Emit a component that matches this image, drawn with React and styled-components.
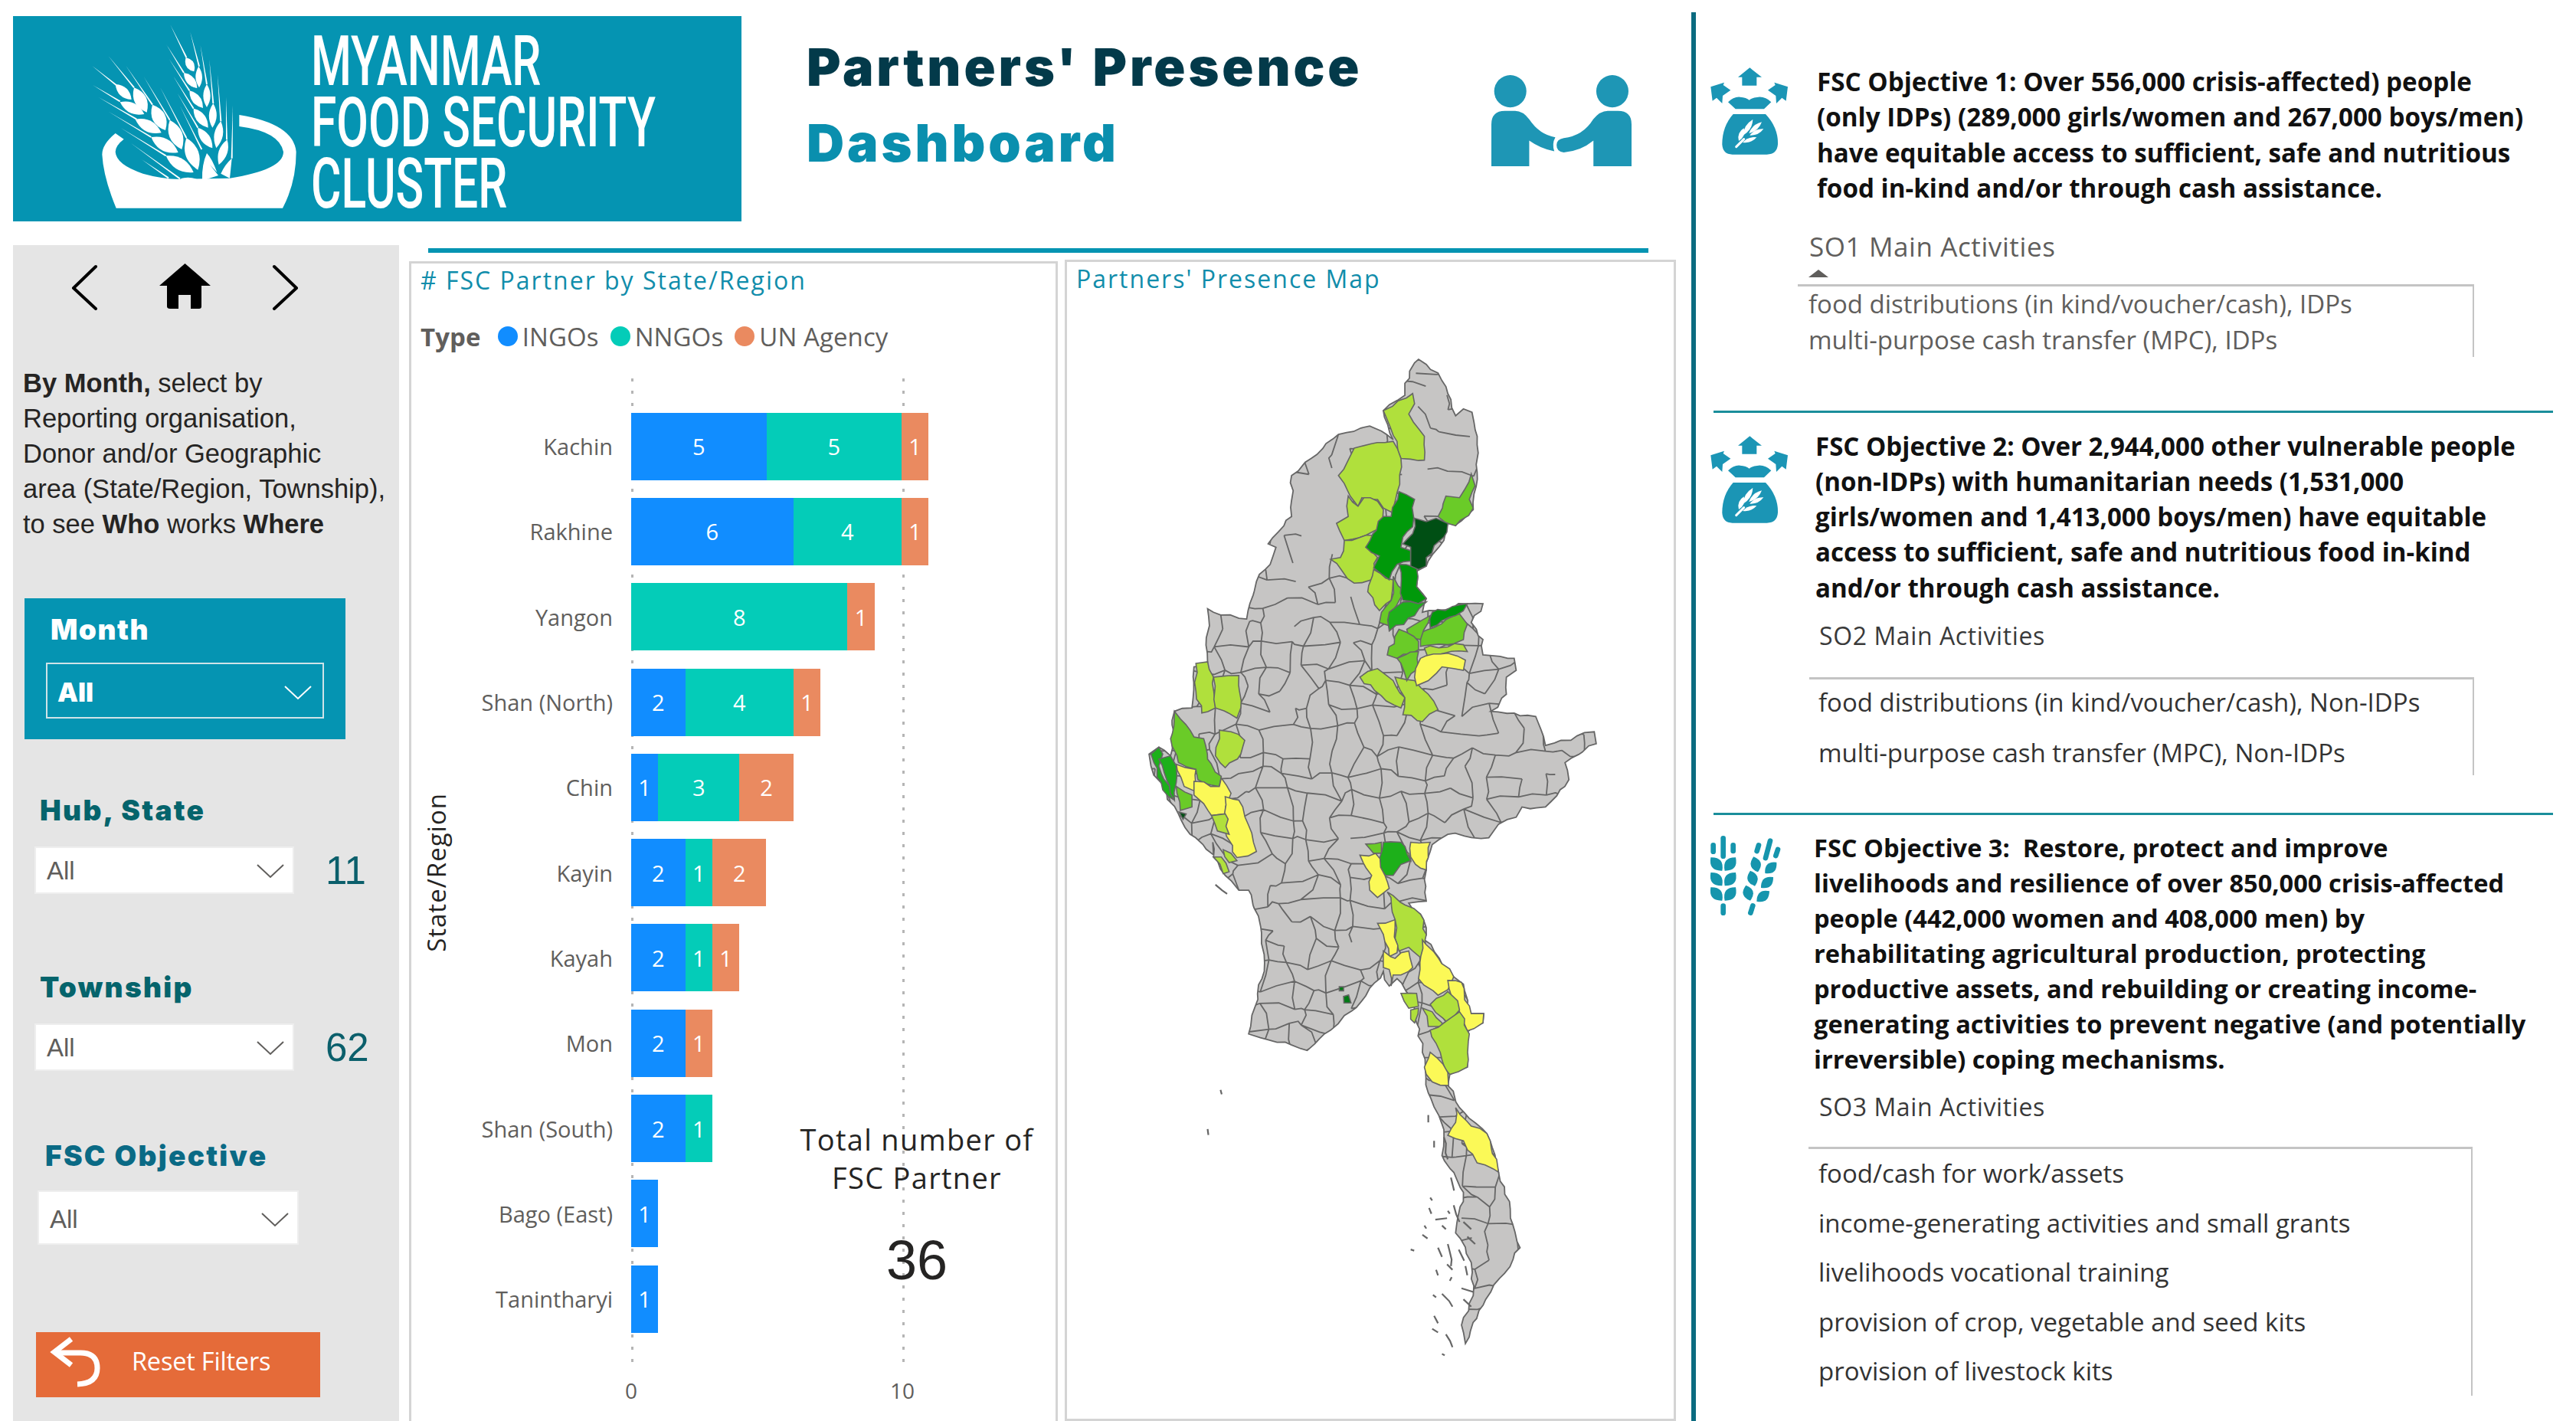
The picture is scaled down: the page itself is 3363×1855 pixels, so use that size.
import React from 'react'
import styled, { createGlobalStyle } from 'styled-components'

const UNIT = 35.3
const SEGOE = `"Open Sans", "Noto Sans", sans-serif`
const HEAVY = `Inter, "DejaVu Sans", sans-serif`
const ARIAL = `"Liberation Sans", Arial, sans-serif`
const TYPE_COLORS = { i: '#118dff', n: '#04ccb8', u: '#ea8a60' }

const ROWS = [
    { name: 'Kachin', i: 5, n: 5, u: 1 },
    { name: 'Rakhine', i: 6, n: 4, u: 1 },
    { name: 'Yangon', i: 0, n: 8, u: 1 },
    { name: 'Shan (North)', i: 2, n: 4, u: 1 },
    { name: 'Chin', i: 1, n: 3, u: 2 },
    { name: 'Kayin', i: 2, n: 1, u: 2 },
    { name: 'Kayah', i: 2, n: 1, u: 1 },
    { name: 'Mon', i: 2, n: 0, u: 1 },
    { name: 'Shan (South)', i: 2, n: 1, u: 0 },
    { name: 'Bago (East)', i: 1, n: 0, u: 0 },
    { name: 'Tanintharyi', i: 1, n: 0, u: 0 },
]

let jagSeed = 4711
const jagRnd = () => {
    jagSeed = (jagSeed * 16807) % 2147483647
    return jagSeed / 2147483647 - 0.5
}

// map points are read off the two crops of the reference, so convert them to page pixels
const convert = (pts, oy, sy) => pts.trim().split(/\s+/).map(p => {
    const [x, y] = p.split(',').map(Number)
    return [1380 + x / 1.96, oy + y / sy]
})
const up = pts => convert(pts, 420, 2.24)
const low = pts => convert(pts, 1100, 2.077)

// borders on the map are jagged, so break each edge into small uneven steps
const jag = (list, closed = true) => {
    const out = []
    list.forEach((a, i) => {
        const b = list[(i + 1) % list.length]
        out.push(a)
        if (!closed && i === list.length - 1) return
        const len = Math.hypot(b[0] - a[0], b[1] - a[1])
        const steps = Math.min(6, Math.floor(len / 9))
        for (let s = 1; s < steps; s++) {
            out.push([
                a[0] + ((b[0] - a[0]) * s) / steps + jagRnd() * 5,
                a[1] + ((b[1] - a[1]) * s) / steps + jagRnd() * 5,
            ])
        }
    })
    return out.map(p => `${p[0].toFixed(1)},${p[1].toFixed(1)}`).join(' ')
}

const OUTLINE = jag([
    ...up(`925,110 945,125 975,150 1000,210 1020,275 1040,255 1062,265 1075,360 1075,440 1065,550 1020,595 1000,590 990,640 950,700 945,715 920,730 920,775 945,810 935,850 1050,825 1090,825 1060,880 1090,930 1090,975 1170,985 1175,1020 1150,1040 1150,1090 1110,1140 1225,1155 1250,1240 1375,1200 1380,1235 1300,1290 1310,1340 1250,1420 1190,1420 1175,1450 1130,1470 1105,1510 1000,1500 960,1530`),
    ...low(`955,25 945,75 945,160 900,165 930,195 945,250 940,265 1015,365 1040,385 1060,465 1092,465 1090,490 1050,515 1050,610 1005,630 1000,660 1030,720 1100,790 1130,895 1160,995 1185,1100 1145,1170 1110,1220 1080,1270 1045,1360 1035,1310 1065,1230 1060,1140 1020,1060 1040,950 985,850 990,780 950,680 935,570 920,490 905,420 870,370 850,390 835,350 780,430 735,470 700,510 640,565 600,550 520,530 490,520 505,450 530,350 515,200 490,130 465,130 430,90 400,40 398,0`),
    ...up(`400,1560 340,1500 310,1440 240,1300 235,1265 260,1245 290,1270 300,1140 345,1130 350,1010 385,1000 385,840 400,850 485,870 510,760 545,710 560,660 540,650 600,570 600,450 650,400 720,330 800,305 830,320 860,345 835,260 890,215 890,180 915,120`),
])

const LIGHT = '#b0e03c'
const MID = '#6acb28'
const GREEN = '#00990a'
const BRIGHT = '#1db01a'
const DARK = '#004f14'
const YELLOW = '#fbf957'

const REGIONS_UP = [
    [LIGHT, '910,210 915,240 900,270 940,335 940,405 880,400 870,350 835,260'],
    [LIGHT, '760,370 860,350 880,400 870,500 860,560 835,545 820,520 780,515 770,540 750,510 720,450 745,405'],
    [LIGHT, '745,510 770,540 785,515 820,525 835,550 835,600 790,625 735,640 715,590 745,570'],
    [LIGHT, '735,640 790,625 820,625 790,660 820,690 805,755 760,765 730,730 700,695 725,690'],
    [LIGHT, '810,725 860,755 855,815 825,845 795,790'],
    [LIGHT, '775,1040 820,1015 860,1050 890,1100 880,1130 830,1095'],
    [LIGHT, '865,1040 915,1050 950,1090 975,1135 935,1170 885,1150 890,1100'],
    [LIGHT, '355,1000 385,995 400,1040 405,1130 370,1145 355,1080'],
    [LIGHT, '400,1040 465,1035 470,1130 460,1160 405,1130'],
    [LIGHT, '415,1195 445,1200 480,1225 470,1265 430,1305 405,1270'],
    [LIGHT, '940,955 1040,945 1050,965 990,970 950,985'],
    [MID, '1060,445 1070,480 1055,520 1065,545 1020,597 975,570 995,510 1030,515'],
    [MID, '860,745 890,790 855,850 850,890 825,880 830,850 855,815'],
    [MID, '930,910 1030,855 1050,885 1040,930 1000,945 930,950'],
    [MID, '895,900 955,860 930,930 900,925'],
    [MID, '875,900 925,935 925,960 870,985 845,975'],
    [MID, '870,985 925,965 925,1015 895,1050 880,1000'],
    [MID, '300,1140 340,1195 350,1215 375,1220 385,1280 420,1330 415,1360 360,1340 355,1310 310,1290 290,1220'],
    [GREEN, '875,497 915,520 910,600 885,630 880,660 905,670 905,700 870,710 850,755 810,720 825,685 790,660 835,570 855,570'],
    [GREEN, '875,710 920,720 920,775 945,810 925,825 885,815'],
    [BRIGHT, '885,820 945,820 915,860 850,905 850,850'],
    [GREEN, '960,850 1050,825 1020,860 955,895'],
    [DARK, '915,575 945,585 970,575 1000,590 990,630 965,655 945,690 945,715 925,725 905,715 905,660 885,650 910,620'],
    [YELLOW, '930,985 1000,970 1045,990 1040,1020 1015,1015 985,1010 950,1050 920,1065 915,1040'],
    [BRIGHT, '240,1265 260,1245 270,1265 260,1300 300,1400 270,1370'],
    [BRIGHT, '260,1280 290,1270 305,1300 300,1400'],
    [MID, '305,1360 345,1385 345,1420 315,1430'],
    [YELLOW, '305,1295 355,1310 355,1375 325,1360'],
    [YELLOW, '350,1345 415,1360 420,1335 445,1380 430,1440 395,1445 375,1410 350,1385'],
    [YELLOW, '430,1390 465,1400 510,1550 460,1568 430,1490'],
    [LIGHT, '395,1445 430,1440 440,1500 410,1490'],
    [DARK, '312,1435 330,1440 322,1456'],
].map(([fill, pts]) => [fill, jag(up(pts))])

const REGIONS_LOW = [
    [MID, '790,5 830,0 830,30 810,30'],
    [LIGHT, '875,0 900,30 905,50 885,30'],
    [BRIGHT, '835,0 880,0 905,50 880,60 860,90 840,90 825,65'],
    [YELLOW, '905,0 955,0 945,75 930,70 905,40'],
    [YELLOW, '775,35 815,30 850,125 820,150 800,130 805,90'],
    [LIGHT, '845,135 890,170 930,195 945,250 940,325 900,285 875,295 865,260 865,210'],
    [YELLOW, '820,220 865,210 870,300 850,310 835,250'],
    [YELLOW, '835,295 865,315 880,300 900,295 910,340 880,360 860,360 855,390 850,345 835,340'],
    [YELLOW, '935,265 1015,365 1000,400 975,415 925,370'],
    [YELLOW, '1000,375 1035,380 1060,465 1092,465 1090,490 1050,512 1030,460 1010,420'],
    [LIGHT, '880,410 920,410 925,445 900,450'],
    [LIGHT, '905,455 925,450 915,490 905,480'],
    [LIGHT, '935,450 960,460 985,490 985,500 950,500'],
    [LIGHT, '955,440 1000,405 1025,430 1030,455 1000,490'],
    [LIGHT, '955,510 990,490 1030,460 1055,520 1050,610 1005,630 985,590'],
    [YELLOW, '955,570 1000,625 1002,660 960,650 945,630 940,610'],
    [YELLOW, '1020,720 1060,770 1100,790 1125,860 1130,895 1075,870 1040,810 1000,795 1020,760'],
    [LIGHT, '400,40 420,40 440,80 425,85'],
    [LIGHT, '425,20 445,30 460,50 440,55'],
    ['#007a14', '733,418 746,414 752,436 734,436'],
    ['#007a14', '722,392 733,392 733,403 722,403'],
].map(([fill, pts]) => [fill, jag(low(pts))])

const ISLANDS = [
    '418,672 421,684', '385,778 387,794', '1008,910 1016,945', '955,964 960,972', '952,992 958,1008',
    '968,1024 998,1020', '985,1040 995,1050', '1015,985 1030,1030', '1000,1090 1008,1150', '1028,1105 1042,1135',
    '935,1065 948,1075', '905,1105 914,1108', '975,1100 985,1125', '970,1160 975,1175', '998,1145 1012,1160',
    '962,1228 970,1235', '985,1225 1012,1260', '965,1285 975,1305', '995,1335 1012,1370', '985,1388 992,1392',
    '1045,1150 1050,1175', '950,740 950,760', '965,810 965,828', '405,115 435,140', '990,800 1000,860',
    '960,1320 975,1330', '1040,1030 1060,1050', '1050,1070 1070,1090', '1035,1210 1065,1220', '1040,1240 1060,1260',
    '940,1040 945,1048', '1000,1000 1005,1008', '1005,1190 1010,1180',
]

// township boundaries: a jittered mesh, clipped to the country outline
const buildMesh = () => {
    let n = 1
    const rnd = () => {
        n += 1
        const v = Math.sin(n * 12.9898) * 43758.5453
        return v - Math.floor(v)
    }
    const nodes = {}
    const cols = 22
    const rows = 47
    for (let i = 0; i <= cols; i++) {
        for (let j = 0; j <= rows; j++) {
            nodes[`${i}:${j}`] = [1470 + i * 30 + (rnd() - 0.5) * 24, 450 + j * 28 + (rnd() - 0.5) * 20]
        }
    }
    const edge = (a, b) => {
        const mx = (a[0] + b[0]) / 2 + (rnd() - 0.5) * 9
        const my = (a[1] + b[1]) / 2 + (rnd() - 0.5) * 9
        return `M${a[0].toFixed(1)} ${a[1].toFixed(1)}L${mx.toFixed(1)} ${my.toFixed(1)}L${b[0].toFixed(1)} ${b[1].toFixed(1)}`
    }
    let d = ''
    for (let i = 0; i <= cols; i++) {
        for (let j = 0; j <= rows; j++) {
            const a = nodes[`${i}:${j}`]
            const skip = a[1] < 770 ? 0.66 : a[0] > 1880 ? 0.42 : a[1] > 1500 ? 0.3 : 0.2
            if (i < cols && rnd() > skip) d += edge(a, nodes[`${i + 1}:${j}`])
            if (j < rows && rnd() > skip) d += edge(a, nodes[`${i}:${j + 1}`])
        }
    }
    return d
}
const MESH = buildMesh()

// a wheat grain: a pointed leaf between two points, w is its full width
const leaf = (x1, y1, x2, y2, w) => {
    const len = Math.hypot(x2 - x1, y2 - y1)
    const nx = ((y2 - y1) / len) * w
    const ny = (-(x2 - x1) / len) * w
    const mx = (x1 + x2) / 2
    const my = (y1 + y2) / 2
    return `M${x1} ${y1}Q${mx + nx} ${my + ny} ${x2} ${y2}Q${mx - nx} ${my - ny} ${x1} ${y1}Z`
}

const awn = (x1, y1, x2, y2) => {
    const len = Math.hypot(x2 - x1, y2 - y1)
    const nx = ((y2 - y1) / len) * 3
    const ny = (-(x2 - x1) / len) * 3
    return `${x1 + nx},${y1 + ny} ${x2},${y2} ${x1 - nx},${y1 - ny}`
}

const LOGO_GRAINS = [
    [92, 255, 155, 315, 36], [165, 268, 215, 365, 48], [237, 335, 288, 435, 52], [305, 395, 352, 510, 52], [370, 465, 415, 590, 52],
    [110, 325, 205, 372, 40], [170, 392, 272, 445, 44], [232, 462, 338, 522, 48], [290, 535, 398, 600, 46],
    [368, 150, 400, 205, 32], [360, 210, 412, 270, 32], [382, 280, 435, 348, 34], [398, 350, 455, 425, 36], [415, 425, 472, 505, 36],
    [418, 185, 420, 268, 26], [450, 255, 450, 345, 28], [475, 330, 472, 425, 30], [505, 400, 487, 505, 34], [530, 472, 497, 570, 34],
    [345, 625, 415, 628, 12],
]

const LOGO_AWNS = [
    [95, 258, 0, 182], [110, 322, 3, 258], [175, 392, 25, 305], [232, 462, 65, 362], [290, 535, 112, 425], [345, 625, 152, 485], [300, 622, 195, 550],
    [165, 268, 65, 145], [237, 335, 133, 182], [305, 395, 203, 225], [370, 465, 268, 268],
    [370, 150, 307, 22], [360, 210, 292, 100], [382, 280, 302, 155], [398, 350, 318, 222], [415, 425, 335, 290], [430, 510, 345, 340],
    [420, 185, 385, 50], [450, 255, 425, 103], [475, 330, 460, 160], [505, 400, 492, 218], [528, 472, 525, 305], [548, 545, 552, 338],
]

const App = () => {
    return (
        <Page>
            <GlobalStyle />
            <LeftPane>
                <Header>
                    <Banner>
                        <BowlLogo />
                        <BannerText>
                            <span>MYANMAR</span>
                            <span>FOOD SECURITY</span>
                            <span>CLUSTER</span>
                        </BannerText>
                    </Banner>
                    <TitleBlock>
                        <TitleLine>Partners' Presence</TitleLine>
                        <TitleLine $accent>Dashboard</TitleLine>
                    </TitleBlock>
                    <Handshake />
                </Header>
                <Body>
                    <Sidebar>
                        <NavRow>
                            <NavIcon width="36" height="62" viewBox="0 0 36 62"><polyline points="32,5 3,33 32,60" fill="none" stroke="#000" strokeWidth="4" strokeLinecap="round" strokeLinejoin="round" /></NavIcon>
                            <NavIcon width="67" height="60" viewBox="0 0 67 60"><path d="M33.5 0 L67 29 H55 V56 Q55 59 52 59 H41 V41 H25 V59 H14 Q10 59 10 56 V29 H0 Z" fill="#000" /></NavIcon>
                            <NavIcon width="36" height="62" viewBox="0 0 36 62"><polyline points="4,5 33,33 4,60" fill="none" stroke="#000" strokeWidth="4" strokeLinecap="round" strokeLinejoin="round" /></NavIcon>
                        </NavRow>
                        <HelpText>
                            <b>By Month,</b> select by<br />
                            Reporting organisation,<br />
                            Donor and/or Geographic<br />
                            area (State/Region, Township),<br />
                            to see <b>Who</b> works <b>Where</b>
                        </HelpText>
                        <MonthBox>
                            <MonthTitle>Month</MonthTitle>
                            <MonthSelect>All<Chevron $color="#fff" /></MonthSelect>
                        </MonthBox>

                        <FilterTitle $top={70} $left={35}>Hub, State</FilterTitle>
                        <FilterRow $top={24} $left={28}>
                            <Dropdown>All<Chevron $color="#605e5c" /></Dropdown>
                            <Count>11</Count>
                        </FilterRow>

                        <FilterTitle $top={99} $left={35}>Township</FilterTitle>
                        <FilterRow $top={24} $left={28}>
                            <Dropdown>All<Chevron $color="#605e5c" /></Dropdown>
                            <Count>62</Count>
                        </FilterRow>

                        <FilterTitle $top={88} $left={42} $color="#0a6a85">FSC Objective</FilterTitle>
                        <FilterRow $top={22} $left={32}>
                            <Dropdown $tall>All<Chevron $color="#605e5c" /></Dropdown>
                        </FilterRow>

                        <ResetButton>
                            <ResetIcon width="110" height="85" viewBox="0 0 110 85">
                                <path d="M26 27 H58 Q80 27 80 47 Q80 67 54 68" fill="none" stroke="#fff" strokeWidth="7" />
                                <path d="M46 9 L24 26 L46 43" fill="none" stroke="#fff" strokeWidth="7" />
                            </ResetIcon>
                            Reset Filters
                        </ResetButton>
                    </Sidebar>

                    <Visuals>
                        <HeaderRule />
                        <Panels>
                            <ChartPanel>
                                <PanelTitle>
                                    # FSC Partner by State/Region
                                </PanelTitle>
                                <Legend>
                                    <LegendName>Type</LegendName>
                                    <LegendItem $color={TYPE_COLORS.i}>INGOs</LegendItem>
                                    <LegendItem $color={TYPE_COLORS.n}>NNGOs</LegendItem>
                                    <LegendItem $color={TYPE_COLORS.u}>UN Agency</LegendItem>
                                </Legend>
                                <ChartBody>
                                    <AxisTitle>State/Region</AxisTitle>
                                    <Labels>
                                        {ROWS.map(row => <RowLabel key={row.name}>{row.name}</RowLabel>)}
                                    </Labels>
                                    <Plot>
                                        {ROWS.map(row => (
                                            <BarRow key={row.name}>
                                                {['i', 'n', 'u'].map(t => row[t] > 0 && (
                                                    <Segment key={t} $width={row[t] * UNIT} $color={TYPE_COLORS[t]}>{row[t]}</Segment>
                                                ))}
                                            </BarRow>
                                        ))}
                                    </Plot>
                                </ChartBody>
                                <AxisRow>
                                    <AxisTick>0</AxisTick>
                                    <AxisTick>10</AxisTick>
                                </AxisRow>
                                <TotalCard>
                                    <TotalLabel>Total number of<br />FSC Partner</TotalLabel>
                                    <TotalValue>36</TotalValue>
                                </TotalCard>
                            </ChartPanel>
                            <MapPanel>
                                <PanelTitle>Partners' Presence Map</PanelTitle>
                                <MapDrawing />
                            </MapPanel>
                        </Panels>
                    </Visuals>
                </Body>
            </LeftPane>

            <Divider />

            <RightPane>
                <ObjectiveRow $top={84}>
                    <SackIcon $top={-4} />
                    <ObjectiveText $left={27} $line={46.4} $size={33.2}>
                        <span>FSC Objective 1: Over 556,000 crisis-affected) people</span>
                        <span>(only IDPs) (289,000 girls/women and 267,000 boys/men)</span>
                        <span>have equitable access to sufficient, safe and nutritious</span>
                        <span>food in-kind and/or through cash assistance.</span>
                    </ObjectiveText>
                </ObjectiveRow>
                <ActivityHeading $top={30} $left={148} $large>SO1 Main Activities</ActivityHeading>
                <SortMark />
                <ActivityBox $top={9} $left={133} $width={883} $height={95}>
                    <ActivityItem $height={46.5} $inset={14} $muted>food distributions (in kind/voucher/cash), IDPs</ActivityItem>
                    <ActivityItem $height={46.5} $inset={14} $muted>multi-purpose cash transfer (MPC), IDPs</ActivityItem>
                </ActivityBox>
                <SectionRule $top={70} />

                <ObjectiveRow $top={21}>
                    <SackIcon $top={1} />
                    <ObjectiveText $left={25} $line={46.25} $size={33.1}>
                        <span>FSC Objective 2: Over 2,944,000 other vulnerable people</span>
                        <span>(non-IDPs) with humanitarian needs (1,531,000</span>
                        <span>girls/women and 1,413,000 boys/men) have equitable</span>
                        <span>access to sufficient, safe and nutritious food in-kind</span>
                        <span>and/or through cash assistance.</span>
                    </ObjectiveText>
                </ObjectiveRow>
                <ActivityHeading $top={17} $left={161}>SO2 Main Activities</ActivityHeading>
                <ActivityBox $top={32} $left={148} $width={868} $height={128}>
                    <ActivityItem $height={59} $gap={7} $inset={12}>food distributions (in kind/voucher/cash), Non-IDPs</ActivityItem>
                    <ActivityItem $height={59} $gap={7} $inset={12}>multi-purpose cash transfer (MPC), Non-IDPs</ActivityItem>
                </ActivityBox>
                <SectionRule $top={49} />

                <ObjectiveRow $top={20}>
                    <WheatIcon />
                    <ObjectiveText $left={33} $line={46.1} $size={32.6}>
                        <span>FSC Objective 3:&nbsp; Restore, protect and improve</span>
                        <span>livelihoods and resilience of over 850,000 crisis-affected</span>
                        <span>people (442,000 women and 408,000 men) by</span>
                        <span>rehabilitating agricultural production, protecting</span>
                        <span>productive assets, and rebuilding or creating income-</span>
                        <span>generating activities to prevent negative (and potentially</span>
                        <span>irreversible) coping mechanisms.</span>
                    </ObjectiveText>
                </ObjectiveRow>
                <ActivityHeading $top={16} $left={161}>SO3 Main Activities</ActivityHeading>
                <ActivityBox $top={30} $left={147} $width={867} $height={325}>
                    <ActivityItem $height={64.5} $inset={13}>food/cash for work/assets</ActivityItem>
                    <ActivityItem $height={64.5} $inset={13}>income-generating activities and small grants</ActivityItem>
                    <ActivityItem $height={64.5} $inset={13}>livelihoods vocational training</ActivityItem>
                    <ActivityItem $height={64.5} $inset={13}>provision of crop, vegetable and seed kits</ActivityItem>
                    <ActivityItem $height={64.5} $inset={13}>provision of livestock kits</ActivityItem>
                </ActivityBox>
            </RightPane>
        </Page>
    )
}

export default App

// Drawings
const Chevron = ({ $color }) => (
    <svg width="36" height="20" viewBox="0 0 36 20">
        <polyline points="1,2 18,18 35,2" fill="none" stroke={$color} strokeWidth="2" />
    </svg>
)

const BowlLogo = () => (
    <LogoSvg width="280" height="260" viewBox="0 0 840 780" fill="#fff">
        <path d="M92 447 L125 470 Q92 495 92 520 Q95 570 200 605 Q270 625 345 627 L540 623 Q750 590 750 520 Q735 440 577 420 V375 Q790 410 800 520 Q800 640 747 740 H95 Q45 620 40 530 Q40 490 92 447 Z" />
        {LOGO_AWNS.map((a, i) => <polygon key={i} points={awn(...a)} />)}
        {LOGO_GRAINS.map((g, i) => <path key={i} d={leaf(...g)} />)}
        <path d="M432 628 Q430 570 450 525 Q470 545 490 600 L462 570 L495 612 L440 630 Z" />
        <path d="M548 545 L540 623 L505 605 Q520 570 548 545 Z" />
    </LogoSvg>
)

const Handshake = () => (
    <HandshakeSvg width="183" height="119" viewBox="142 297 548 356" fill="#1e96b5">
        <circle cx="216" cy="360" r="63" />
        <circle cx="615" cy="360" r="63" />
        <path d="M142 653 V490 Q142 437 195 437 H235 Q265 437 290 470 Q330 530 392 540 Q378 565 388 595 Q335 585 290 553 V653 Z" />
        <path d="M690 653 V490 Q690 437 637 437 H597 Q567 437 540 470 Q500 535 425 543 Q397 548 397 570 Q397 597 425 599 Q490 595 541 553 V653 Z" />
    </HandshakeSvg>
)

const SackIcon = ({ $top = 0 }) => (
    <IconSvg $top={$top} width="120" height="130" viewBox="0 0 360 390" fill="#1b95b5">
        <polygon points="178,25 225,62 205,62 205,95 148,95 148,62 132,62" />
        <polygon points="25,100 78,83 74,93 103,113 72,135 70,165 48,143 32,155" />
        <polygon points="327,100 274,83 278,93 249,113 280,135 282,165 304,143 320,155" />
        <path d="M93 160 Q115 138 140 140 Q165 142 176 152 Q188 142 212 140 Q240 138 262 160 L234 187 H122 Z" />
        <path d="M113 207 H240 Q290 260 288 325 Q285 365 245 365 H110 Q72 365 70 325 Q70 255 113 207 Z" />
        <g fill="#fff">
            <line x1="125" y1="335" x2="155" y2="305" stroke="#fff" strokeWidth="9" strokeLinecap="round" />
            <path d={leaf(135, 312, 155, 262, 20)} />
            <path d={leaf(152, 290, 190, 228, 20)} />
            <path d={leaf(175, 282, 225, 238, 18)} />
            <path d={leaf(178, 290, 232, 265, 16)} />
            <path d={leaf(150, 318, 205, 298, 16)} />
        </g>
    </IconSvg>
)

const WheatIcon = () => (
    <IconSvg $top={1} width="110" height="120" viewBox="0 0 330 360" fill="#1595ad">
        <g stroke="#1595ad" strokeWidth="20" strokeLinecap="round">
            <line x1="35" y1="55" x2="35" y2="80" />
            <line x1="74" y1="28" x2="74" y2="98" />
            <line x1="113" y1="55" x2="113" y2="78" />
            <line x1="74" y1="293" x2="74" y2="320" />
            <line x1="213" y1="55" x2="206" y2="78" />
            <line x1="258" y1="38" x2="240" y2="105" />
            <line x1="288" y1="72" x2="280" y2="96" />
            <line x1="190" y1="292" x2="181" y2="320" />
        </g>
        {[103, 162, 220].map(y => (
            <g key={y}>
                <path d={leaf(25, y, 70, y + 52, 42)} />
                <path d={leaf(123, y, 80, y + 52, 42)} />
            </g>
        ))}
        <path d={leaf(193, 100, 210, 160, 40)} />
        <path d={leaf(180, 155, 198, 215, 40)} />
        <path d={leaf(163, 212, 180, 272, 40)} />
        <path d={leaf(283, 122, 238, 165, 38)} />
        <path d={leaf(270, 180, 222, 222, 38)} />
        <path d={leaf(255, 235, 205, 275, 38)} />
    </IconSvg>
)

const MapDrawing = () => (
    <MapSvg width="792" height="1445" viewBox="1393 408 792 1445">
        <defs>
            <clipPath id="country"><polygon points={OUTLINE} /></clipPath>
        </defs>
        <polygon points={OUTLINE} fill="#c6c5c4" />
        <path d={MESH} clipPath="url(#country)" fill="none" stroke="#666" strokeWidth="1.8" />
        <polygon points={OUTLINE} fill="none" stroke="#666" strokeWidth="1.8" />
        {REGIONS_UP.map(([fill, pts], i) => <polygon key={i} points={pts} fill={fill} stroke="#666" strokeWidth="1.6" />)}
        {REGIONS_LOW.map(([fill, pts], i) => <polygon key={i} points={pts} fill={fill} stroke="#666" strokeWidth="1.6" />)}
        {ISLANDS.map((pts, i) => <polyline key={i} points={jag(low(pts), false)} fill="none" stroke="#666" strokeWidth="2.2" />)}
    </MapSvg>
)

// Components
const GlobalStyle = createGlobalStyle`
    html, body {
        margin:0;
        padding:0;
        background:#fff;
    }
    * {
        box-sizing:border-box;
    }
`

const Page = styled.div`
    display:flex;
    width:3363px;
    height:1855px;
    overflow:hidden;
    background:#fff;
    font-family:${SEGOE};
`

const LeftPane = styled.div`
    width:2208px;
    display:flex;
    flex-direction:column;
`

const Header = styled.div`
    display:flex;
    height:320px;
    padding:21px 0 0 17px;
    align-items:flex-start;
`

const Banner = styled.div`
    display:flex;
    flex:none;
    width:951px;
    height:268px;
    background:#0594b2;
`

const LogoSvg = styled.svg`
    flex:none;
    margin:4px 0 0 103px;
`

const BannerText = styled.div`
    display:flex;
    flex-direction:column;
    margin:19px 0 0 6px;
    font-family:Roboto, sans-serif;
    font-weight:500;
    font-size:91px;
    line-height:80px;
    color:#fff;

    span {
        display:block;
        white-space:nowrap;
        transform:scaleX(0.665);
        transform-origin:left center;
    }
`

const TitleBlock = styled.div`
    display:flex;
    flex:none;
    flex-direction:column;
    gap:20px;
    margin:27px 0 0 85px;
    width:894px;
`

const TitleLine = styled.div`
    font-family:${HEAVY};
    font-weight:900;
    font-size:68px;
    line-height:79px;
    letter-spacing:3.9px;
    white-space:nowrap;
    color:${p => p.$accent ? '#0a8fae' : '#033a4a'};
`

const HandshakeSvg = styled.svg`
    flex:none;
    margin-top:77px;
`

const Body = styled.div`
    flex:1;
    display:flex;
    min-height:0;
`

const Sidebar = styled.div`
    width:504px;
    margin-left:17px;
    padding-top:23px;
    background:#e5e5e5;
    display:flex;
    flex-direction:column;
`

const NavRow = styled.div`
    display:flex;
    align-items:center;
    height:62px;
    padding-left:76px;
    gap:79px;
`

const NavIcon = styled.svg`
    flex:none;
`

const HelpText = styled.div`
    margin:72px 0 0 13px;
    font-family:${ARIAL};
    font-size:34.5px;
    line-height:46px;
    color:#252423;
    white-space:nowrap;
`

const MonthBox = styled.div`
    width:419px;
    height:184px;
    margin:74px 0 0 15px;
    padding:18px 28px 0;
    background:#0594b2;
`

const MonthTitle = styled.div`
    font-family:${HEAVY};
    font-weight:900;
    font-size:37px;
    line-height:46px;
    letter-spacing:1.5px;
    color:#fff;
    padding-left:6px;
`

const MonthSelect = styled.div`
    display:flex;
    align-items:center;
    justify-content:space-between;
    height:73px;
    margin-top:20px;
    padding:4px 14px 0 13px;
    border:2px solid #cfe3e8;
    font-family:${HEAVY};
    font-weight:900;
    font-size:34px;
    color:#fff;
`

const FilterTitle = styled.div`
    margin:${p => p.$top}px 0 0 ${p => p.$left}px;
    font-family:${HEAVY};
    font-weight:900;
    font-size:37px;
    line-height:46px;
    letter-spacing:2.3px;
    color:${p => p.$color || '#05646c'};
`

const FilterRow = styled.div`
    display:flex;
    align-items:center;
    margin:${p => p.$top}px 0 0 ${p => p.$left}px;
`

const Dropdown = styled.div`
    display:flex;
    align-items:center;
    justify-content:space-between;
    width:${p => p.$tall ? 341 : 339}px;
    height:${p => p.$tall ? 71 : 62}px;
    padding:${p => p.$tall ? 4 : 2}px 11px 0 14px;
    background:#fff;
    border:2px solid #eeeeee;
    font-family:${ARIAL};
    font-size:33px;
    color:#605e5c;
`

const Count = styled.div`
    margin-left:41px;
    font-family:${ARIAL};
    font-size:51px;
    color:#0b5f6b;
`

const ResetButton = styled.div`
    display:flex;
    align-items:center;
    gap:15px;
    width:371px;
    height:85px;
    margin:114px 0 0 30px;
    padding-bottom:10px;
    background:#e56b39;
    font-size:32.5px;
    color:#fff;
    letter-spacing:-0.2px;
`

const ResetIcon = styled.svg`
    flex:none;
    margin-top:10px;
`

const Visuals = styled.div`
    width:1667px;
    display:flex;
    flex-direction:column;
    padding-left:13px;
`

const HeaderRule = styled.div`
    width:1593px;
    height:6px;
    margin:4px 0 0 25px;
    background:#0594b2;
`

const Panels = styled.div`
    flex:1;
    display:flex;
    gap:9px;
    margin-top:9px;
    min-height:0;
`

const ChartPanel = styled.div`
    position:relative;
    width:847px;
    border:3px solid #d4d4d4;
    border-bottom-width:0;
    margin-top:2px;
`

const MapPanel = styled.div`
    width:798px;
    border:3px solid #d4d4d4;
    display:flex;
    flex-direction:column;
`

const PanelTitle = styled.div`
    height:44px;
    padding-left:12px;
    font-size:32px;
    line-height:44px;
    letter-spacing:2px;
    color:#118dab;
    white-space:nowrap;
`

const Legend = styled.div`
    display:flex;
    align-items:center;
    height:44px;
    margin-top:29px;
    padding-left:12px;
    font-size:33px;
    letter-spacing:0.1px;
    color:#605e5c;
`

const LegendName = styled.span`
    font-weight:700;
    margin-right:22px;
`

const LegendItem = styled.span`
    display:flex;
    align-items:center;
    margin-right:15px;
    white-space:nowrap;

    &:before {
        content:"";
        width:26px;
        height:26px;
        margin-right:6px;
        border-radius:50%;
        background:${p => p.$color};
    }
`

const ChartBody = styled.div`
    display:flex;
    height:1290px;
    margin-top:33px;
`

const AxisTitle = styled.div`
    align-self:center;
    width:36px;
    margin-left:15px;
    writing-mode:vertical-rl;
    transform:rotate(180deg);
    font-size:33px;
    line-height:36px;
    letter-spacing:1px;
    color:#252423;
    white-space:nowrap;
`

const Labels = styled.div`
    width:212px;
    margin-right:24px;
    padding-top:33px;
    display:flex;
    flex-direction:column;
`

const RowLabel = styled.div`
    height:111.3px;
    display:flex;
    align-items:center;
    justify-content:flex-end;
    font-size:29px;
    color:#605e5c;
    white-space:nowrap;
`

const Plot = styled.div`
    flex:1;
    padding-top:33px;
    display:flex;
    flex-direction:column;
    background-image:linear-gradient(#b5b5b5 25%, transparent 25%), linear-gradient(#b5b5b5 25%, transparent 25%);
    background-size:3px 16px, 3px 16px;
    background-position:0 0, 353.5px 0;
    background-repeat:repeat-y;
`

const BarRow = styled.div`
    display:flex;
    align-items:center;
    height:111.3px;
`

const Segment = styled.div`
    display:flex;
    align-items:center;
    justify-content:center;
    width:${p => p.$width}px;
    height:88px;
    background:${p => p.$color};
    color:#fff;
    font-size:29px;
`

const AxisRow = styled.div`
    display:flex;
    gap:354px;
    margin:11px 0 0 287px;
    line-height:40px;
    font-size:28px;
    color:#605e5c;
`

const AxisTick = styled.div`
    display:flex;
    justify-content:center;
    width:0;
`

const TotalCard = styled.div`
    position:absolute;
    left:480px;
    top:1118px;
    width:360px;
    text-align:center;
`

const TotalLabel = styled.div`
    font-size:38px;
    line-height:50px;
    letter-spacing:1.3px;
    color:#252423;
`

const TotalValue = styled.div`
    margin-top:41px;
    font-family:${ARIAL};
    font-size:72px;
    line-height:84px;
    color:#252423;
`

const MapSvg = styled.svg`
    display:block;
    margin-top:22px;
`

const Divider = styled.div`
    width:6px;
    margin-top:16px;
    background:#0b6b80;
`

const RightPane = styled.div`
    width:1149px;
    display:flex;
    flex-direction:column;
`

const ObjectiveRow = styled.div`
    display:flex;
    align-items:flex-start;
    margin-top:${p => p.$top}px;
`

const IconSvg = styled.svg`
    flex:none;
    margin:${p => p.$top}px 0 0 11px;
`

const ObjectiveText = styled.div`
    margin-left:${p => p.$left}px;
    font-weight:700;
    font-size:${p => p.$size}px;
    line-height:${p => p.$line}px;
    color:#111;

    span {
        display:block;
        white-space:nowrap;
    }
`

const ActivityHeading = styled.div`
    margin:${p => p.$top}px 0 0 ${p => p.$left}px;
    height:44px;
    line-height:44px;
    font-size:${p => p.$large ? 35 : 32}px;
    letter-spacing:0.6px;
    color:${p => p.$large ? '#605e5c' : '#3a3a3a'};
    white-space:nowrap;
`

const SortMark = styled.div`
    width:0;
    height:0;
    margin:8px 0 0 147px;
    border-left:13px solid transparent;
    border-right:13px solid transparent;
    border-bottom:10px solid #605e5c;
`

const ActivityBox = styled.div`
    width:${p => p.$width}px;
    height:${p => p.$height}px;
    margin:${p => p.$top}px 0 0 ${p => p.$left}px;
    border-top:3px solid #c4c4c4;
    border-right:2px solid #c4c4c4;
`

const ActivityItem = styled.div`
    height:${p => p.$height}px;
    margin-bottom:${p => p.$gap || 0}px;
    display:flex;
    align-items:center;
    padding-left:${p => p.$inset}px;
    font-size:33px;
    color:${p => p.$muted ? '#605e5c' : '#333'};
    white-space:nowrap;
`

const SectionRule = styled.div`
    width:1096px;
    height:3px;
    margin:${p => p.$top}px 0 0 23px;
    background:#1a8e9b;
`
